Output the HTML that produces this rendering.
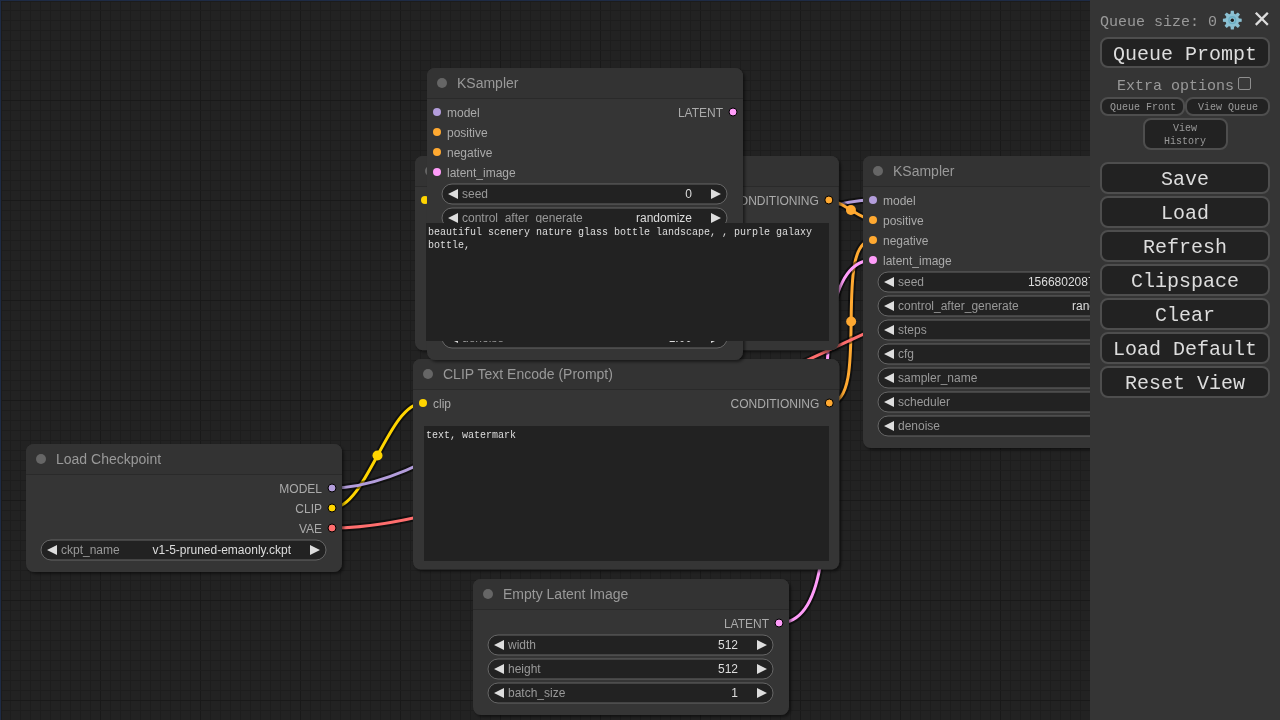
<!DOCTYPE html><html><head><meta charset="utf-8"><style>
html,body{margin:0;padding:0;width:1280px;height:720px;overflow:hidden;background:#222;}
svg{position:absolute;left:0;top:0;}
text{font-family:"Liberation Sans",sans-serif;}
.ta{position:absolute;box-sizing:border-box;background:#222;color:#ddd;font-family:"Liberation Mono",monospace;font-size:10px;line-height:13px;padding:3px 2px 2px 2px;white-space:pre-wrap;word-wrap:break-word;overflow:hidden;}
.menu{position:absolute;left:1090px;top:0;width:190px;height:720px;background:#353535;font-family:"Liberation Mono",monospace;color:#999;}
.btn{position:absolute;box-sizing:border-box;background:#222;color:#ddd;border:2px solid #4e4e4e;border-radius:8px;text-align:center;font-family:"Liberation Mono",monospace;}
.big{left:10px;width:170px;height:31.5px;font-size:20px;line-height:32px;}
</style></head><body><div style="position:absolute;left:0;top:0;width:1280px;height:720px;will-change:transform;">
<svg width="1280" height="720" viewBox="0 0 1280 720">
<defs><filter id="sh" x="-10%" y="-10%" width="130%" height="130%"><feDropShadow dx="2" dy="2" stdDeviation="1.5" flood-color="#000" flood-opacity="0.5"/></filter></defs>
<rect width="1280" height="720" fill="#222"/>
<g shape-rendering="crispEdges"><rect x="0" y="0" width="1" height="720" fill="#191919"/><rect x="10" y="0" width="1" height="720" fill="#1d1d1d"/><rect x="20" y="0" width="1" height="720" fill="#1d1d1d"/><rect x="30" y="0" width="1" height="720" fill="#1d1d1d"/><rect x="40" y="0" width="1" height="720" fill="#1d1d1d"/><rect x="50" y="0" width="1" height="720" fill="#1d1d1d"/><rect x="60" y="0" width="1" height="720" fill="#1d1d1d"/><rect x="70" y="0" width="1" height="720" fill="#1d1d1d"/><rect x="80" y="0" width="1" height="720" fill="#1d1d1d"/><rect x="90" y="0" width="1" height="720" fill="#1d1d1d"/><rect x="100" y="0" width="1" height="720" fill="#191919"/><rect x="110" y="0" width="1" height="720" fill="#1d1d1d"/><rect x="120" y="0" width="1" height="720" fill="#1d1d1d"/><rect x="130" y="0" width="1" height="720" fill="#1d1d1d"/><rect x="140" y="0" width="1" height="720" fill="#1d1d1d"/><rect x="150" y="0" width="1" height="720" fill="#1d1d1d"/><rect x="160" y="0" width="1" height="720" fill="#1d1d1d"/><rect x="170" y="0" width="1" height="720" fill="#1d1d1d"/><rect x="180" y="0" width="1" height="720" fill="#1d1d1d"/><rect x="190" y="0" width="1" height="720" fill="#1d1d1d"/><rect x="200" y="0" width="1" height="720" fill="#191919"/><rect x="210" y="0" width="1" height="720" fill="#1d1d1d"/><rect x="220" y="0" width="1" height="720" fill="#1d1d1d"/><rect x="230" y="0" width="1" height="720" fill="#1d1d1d"/><rect x="240" y="0" width="1" height="720" fill="#1d1d1d"/><rect x="250" y="0" width="1" height="720" fill="#1d1d1d"/><rect x="260" y="0" width="1" height="720" fill="#1d1d1d"/><rect x="270" y="0" width="1" height="720" fill="#1d1d1d"/><rect x="280" y="0" width="1" height="720" fill="#1d1d1d"/><rect x="290" y="0" width="1" height="720" fill="#1d1d1d"/><rect x="300" y="0" width="1" height="720" fill="#191919"/><rect x="310" y="0" width="1" height="720" fill="#1d1d1d"/><rect x="320" y="0" width="1" height="720" fill="#1d1d1d"/><rect x="330" y="0" width="1" height="720" fill="#1d1d1d"/><rect x="340" y="0" width="1" height="720" fill="#1d1d1d"/><rect x="350" y="0" width="1" height="720" fill="#1d1d1d"/><rect x="360" y="0" width="1" height="720" fill="#1d1d1d"/><rect x="370" y="0" width="1" height="720" fill="#1d1d1d"/><rect x="380" y="0" width="1" height="720" fill="#1d1d1d"/><rect x="390" y="0" width="1" height="720" fill="#1d1d1d"/><rect x="400" y="0" width="1" height="720" fill="#191919"/><rect x="410" y="0" width="1" height="720" fill="#1d1d1d"/><rect x="420" y="0" width="1" height="720" fill="#1d1d1d"/><rect x="430" y="0" width="1" height="720" fill="#1d1d1d"/><rect x="440" y="0" width="1" height="720" fill="#1d1d1d"/><rect x="450" y="0" width="1" height="720" fill="#1d1d1d"/><rect x="460" y="0" width="1" height="720" fill="#1d1d1d"/><rect x="470" y="0" width="1" height="720" fill="#1d1d1d"/><rect x="480" y="0" width="1" height="720" fill="#1d1d1d"/><rect x="490" y="0" width="1" height="720" fill="#1d1d1d"/><rect x="500" y="0" width="1" height="720" fill="#191919"/><rect x="510" y="0" width="1" height="720" fill="#1d1d1d"/><rect x="520" y="0" width="1" height="720" fill="#1d1d1d"/><rect x="530" y="0" width="1" height="720" fill="#1d1d1d"/><rect x="540" y="0" width="1" height="720" fill="#1d1d1d"/><rect x="550" y="0" width="1" height="720" fill="#1d1d1d"/><rect x="560" y="0" width="1" height="720" fill="#1d1d1d"/><rect x="570" y="0" width="1" height="720" fill="#1d1d1d"/><rect x="580" y="0" width="1" height="720" fill="#1d1d1d"/><rect x="590" y="0" width="1" height="720" fill="#1d1d1d"/><rect x="600" y="0" width="1" height="720" fill="#191919"/><rect x="610" y="0" width="1" height="720" fill="#1d1d1d"/><rect x="620" y="0" width="1" height="720" fill="#1d1d1d"/><rect x="630" y="0" width="1" height="720" fill="#1d1d1d"/><rect x="640" y="0" width="1" height="720" fill="#1d1d1d"/><rect x="650" y="0" width="1" height="720" fill="#1d1d1d"/><rect x="660" y="0" width="1" height="720" fill="#1d1d1d"/><rect x="670" y="0" width="1" height="720" fill="#1d1d1d"/><rect x="680" y="0" width="1" height="720" fill="#1d1d1d"/><rect x="690" y="0" width="1" height="720" fill="#1d1d1d"/><rect x="700" y="0" width="1" height="720" fill="#191919"/><rect x="710" y="0" width="1" height="720" fill="#1d1d1d"/><rect x="720" y="0" width="1" height="720" fill="#1d1d1d"/><rect x="730" y="0" width="1" height="720" fill="#1d1d1d"/><rect x="740" y="0" width="1" height="720" fill="#1d1d1d"/><rect x="750" y="0" width="1" height="720" fill="#1d1d1d"/><rect x="760" y="0" width="1" height="720" fill="#1d1d1d"/><rect x="770" y="0" width="1" height="720" fill="#1d1d1d"/><rect x="780" y="0" width="1" height="720" fill="#1d1d1d"/><rect x="790" y="0" width="1" height="720" fill="#1d1d1d"/><rect x="800" y="0" width="1" height="720" fill="#191919"/><rect x="810" y="0" width="1" height="720" fill="#1d1d1d"/><rect x="820" y="0" width="1" height="720" fill="#1d1d1d"/><rect x="830" y="0" width="1" height="720" fill="#1d1d1d"/><rect x="840" y="0" width="1" height="720" fill="#1d1d1d"/><rect x="850" y="0" width="1" height="720" fill="#1d1d1d"/><rect x="860" y="0" width="1" height="720" fill="#1d1d1d"/><rect x="870" y="0" width="1" height="720" fill="#1d1d1d"/><rect x="880" y="0" width="1" height="720" fill="#1d1d1d"/><rect x="890" y="0" width="1" height="720" fill="#1d1d1d"/><rect x="900" y="0" width="1" height="720" fill="#191919"/><rect x="910" y="0" width="1" height="720" fill="#1d1d1d"/><rect x="920" y="0" width="1" height="720" fill="#1d1d1d"/><rect x="930" y="0" width="1" height="720" fill="#1d1d1d"/><rect x="940" y="0" width="1" height="720" fill="#1d1d1d"/><rect x="950" y="0" width="1" height="720" fill="#1d1d1d"/><rect x="960" y="0" width="1" height="720" fill="#1d1d1d"/><rect x="970" y="0" width="1" height="720" fill="#1d1d1d"/><rect x="980" y="0" width="1" height="720" fill="#1d1d1d"/><rect x="990" y="0" width="1" height="720" fill="#1d1d1d"/><rect x="1000" y="0" width="1" height="720" fill="#191919"/><rect x="1010" y="0" width="1" height="720" fill="#1d1d1d"/><rect x="1020" y="0" width="1" height="720" fill="#1d1d1d"/><rect x="1030" y="0" width="1" height="720" fill="#1d1d1d"/><rect x="1040" y="0" width="1" height="720" fill="#1d1d1d"/><rect x="1050" y="0" width="1" height="720" fill="#1d1d1d"/><rect x="1060" y="0" width="1" height="720" fill="#1d1d1d"/><rect x="1070" y="0" width="1" height="720" fill="#1d1d1d"/><rect x="1080" y="0" width="1" height="720" fill="#1d1d1d"/><rect x="1090" y="0" width="1" height="720" fill="#1d1d1d"/><rect x="1100" y="0" width="1" height="720" fill="#191919"/><rect x="1110" y="0" width="1" height="720" fill="#1d1d1d"/><rect x="1120" y="0" width="1" height="720" fill="#1d1d1d"/><rect x="1130" y="0" width="1" height="720" fill="#1d1d1d"/><rect x="1140" y="0" width="1" height="720" fill="#1d1d1d"/><rect x="1150" y="0" width="1" height="720" fill="#1d1d1d"/><rect x="1160" y="0" width="1" height="720" fill="#1d1d1d"/><rect x="1170" y="0" width="1" height="720" fill="#1d1d1d"/><rect x="1180" y="0" width="1" height="720" fill="#1d1d1d"/><rect x="1190" y="0" width="1" height="720" fill="#1d1d1d"/><rect x="1200" y="0" width="1" height="720" fill="#191919"/><rect x="1210" y="0" width="1" height="720" fill="#1d1d1d"/><rect x="1220" y="0" width="1" height="720" fill="#1d1d1d"/><rect x="1230" y="0" width="1" height="720" fill="#1d1d1d"/><rect x="1240" y="0" width="1" height="720" fill="#1d1d1d"/><rect x="1250" y="0" width="1" height="720" fill="#1d1d1d"/><rect x="1260" y="0" width="1" height="720" fill="#1d1d1d"/><rect x="1270" y="0" width="1" height="720" fill="#1d1d1d"/><rect x="0" y="0" width="1280" height="1" fill="#191919"/><rect x="0" y="10" width="1280" height="1" fill="#1d1d1d"/><rect x="0" y="20" width="1280" height="1" fill="#1d1d1d"/><rect x="0" y="30" width="1280" height="1" fill="#1d1d1d"/><rect x="0" y="40" width="1280" height="1" fill="#1d1d1d"/><rect x="0" y="50" width="1280" height="1" fill="#1d1d1d"/><rect x="0" y="60" width="1280" height="1" fill="#1d1d1d"/><rect x="0" y="70" width="1280" height="1" fill="#1d1d1d"/><rect x="0" y="80" width="1280" height="1" fill="#1d1d1d"/><rect x="0" y="90" width="1280" height="1" fill="#1d1d1d"/><rect x="0" y="100" width="1280" height="1" fill="#191919"/><rect x="0" y="110" width="1280" height="1" fill="#1d1d1d"/><rect x="0" y="120" width="1280" height="1" fill="#1d1d1d"/><rect x="0" y="130" width="1280" height="1" fill="#1d1d1d"/><rect x="0" y="140" width="1280" height="1" fill="#1d1d1d"/><rect x="0" y="150" width="1280" height="1" fill="#1d1d1d"/><rect x="0" y="160" width="1280" height="1" fill="#1d1d1d"/><rect x="0" y="170" width="1280" height="1" fill="#1d1d1d"/><rect x="0" y="180" width="1280" height="1" fill="#1d1d1d"/><rect x="0" y="190" width="1280" height="1" fill="#1d1d1d"/><rect x="0" y="200" width="1280" height="1" fill="#191919"/><rect x="0" y="210" width="1280" height="1" fill="#1d1d1d"/><rect x="0" y="220" width="1280" height="1" fill="#1d1d1d"/><rect x="0" y="230" width="1280" height="1" fill="#1d1d1d"/><rect x="0" y="240" width="1280" height="1" fill="#1d1d1d"/><rect x="0" y="250" width="1280" height="1" fill="#1d1d1d"/><rect x="0" y="260" width="1280" height="1" fill="#1d1d1d"/><rect x="0" y="270" width="1280" height="1" fill="#1d1d1d"/><rect x="0" y="280" width="1280" height="1" fill="#1d1d1d"/><rect x="0" y="290" width="1280" height="1" fill="#1d1d1d"/><rect x="0" y="300" width="1280" height="1" fill="#191919"/><rect x="0" y="310" width="1280" height="1" fill="#1d1d1d"/><rect x="0" y="320" width="1280" height="1" fill="#1d1d1d"/><rect x="0" y="330" width="1280" height="1" fill="#1d1d1d"/><rect x="0" y="340" width="1280" height="1" fill="#1d1d1d"/><rect x="0" y="350" width="1280" height="1" fill="#1d1d1d"/><rect x="0" y="360" width="1280" height="1" fill="#1d1d1d"/><rect x="0" y="370" width="1280" height="1" fill="#1d1d1d"/><rect x="0" y="380" width="1280" height="1" fill="#1d1d1d"/><rect x="0" y="390" width="1280" height="1" fill="#1d1d1d"/><rect x="0" y="400" width="1280" height="1" fill="#191919"/><rect x="0" y="410" width="1280" height="1" fill="#1d1d1d"/><rect x="0" y="420" width="1280" height="1" fill="#1d1d1d"/><rect x="0" y="430" width="1280" height="1" fill="#1d1d1d"/><rect x="0" y="440" width="1280" height="1" fill="#1d1d1d"/><rect x="0" y="450" width="1280" height="1" fill="#1d1d1d"/><rect x="0" y="460" width="1280" height="1" fill="#1d1d1d"/><rect x="0" y="470" width="1280" height="1" fill="#1d1d1d"/><rect x="0" y="480" width="1280" height="1" fill="#1d1d1d"/><rect x="0" y="490" width="1280" height="1" fill="#1d1d1d"/><rect x="0" y="500" width="1280" height="1" fill="#191919"/><rect x="0" y="510" width="1280" height="1" fill="#1d1d1d"/><rect x="0" y="520" width="1280" height="1" fill="#1d1d1d"/><rect x="0" y="530" width="1280" height="1" fill="#1d1d1d"/><rect x="0" y="540" width="1280" height="1" fill="#1d1d1d"/><rect x="0" y="550" width="1280" height="1" fill="#1d1d1d"/><rect x="0" y="560" width="1280" height="1" fill="#1d1d1d"/><rect x="0" y="570" width="1280" height="1" fill="#1d1d1d"/><rect x="0" y="580" width="1280" height="1" fill="#1d1d1d"/><rect x="0" y="590" width="1280" height="1" fill="#1d1d1d"/><rect x="0" y="600" width="1280" height="1" fill="#191919"/><rect x="0" y="610" width="1280" height="1" fill="#1d1d1d"/><rect x="0" y="620" width="1280" height="1" fill="#1d1d1d"/><rect x="0" y="630" width="1280" height="1" fill="#1d1d1d"/><rect x="0" y="640" width="1280" height="1" fill="#1d1d1d"/><rect x="0" y="650" width="1280" height="1" fill="#1d1d1d"/><rect x="0" y="660" width="1280" height="1" fill="#1d1d1d"/><rect x="0" y="670" width="1280" height="1" fill="#1d1d1d"/><rect x="0" y="680" width="1280" height="1" fill="#1d1d1d"/><rect x="0" y="690" width="1280" height="1" fill="#1d1d1d"/><rect x="0" y="700" width="1280" height="1" fill="#191919"/><rect x="0" y="710" width="1280" height="1" fill="#1d1d1d"/></g>
<rect x="0" y="1" width="1280" height="1" fill="#1c1c1c"/><rect x="1" y="0" width="1" height="720" fill="#1c1c1c"/><rect x="0" y="0" width="1280" height="1" fill="#1e2b45"/><rect x="0" y="0" width="1" height="720" fill="#1e2b45"/>
<path d="M332 508 C366.74 508 388.26 403 423 403" fill="none" stroke="rgba(0,0,0,0.5)" stroke-width="7" stroke-linejoin="round"/>
<path d="M332 508 C366.74 508 388.26 403 423 403" fill="none" stroke="#FFD500" stroke-width="3"/>
<circle cx="377.5" cy="455.5" r="5" fill="#FFD500"/>
<path d="M332 488 C485.22 488 719.78 200 873 200" fill="none" stroke="rgba(0,0,0,0.5)" stroke-width="7" stroke-linejoin="round"/>
<path d="M332 488 C485.22 488 719.78 200 873 200" fill="none" stroke="#B39DDB" stroke-width="3"/>
<circle cx="602.5" cy="344" r="5" fill="#B39DDB"/>
<path d="M828.84 200 C840.96 200 860.88 220 873 220" fill="none" stroke="rgba(0,0,0,0.5)" stroke-width="7" stroke-linejoin="round"/>
<path d="M828.84 200 C840.96 200 860.88 220 873 220" fill="none" stroke="#FFA931" stroke-width="3"/>
<circle cx="850.92" cy="210" r="5" fill="#FFA931"/>
<path d="M829.28 403 C871.47 403 830.81 240 873 240" fill="none" stroke="rgba(0,0,0,0.5)" stroke-width="7" stroke-linejoin="round"/>
<path d="M829.28 403 C871.47 403 830.81 240 873 240" fill="none" stroke="#FFA931" stroke-width="3"/>
<circle cx="851.14" cy="321.5" r="5" fill="#FFA931"/>
<path d="M779 623 C872.74 623 779.26 260 873 260" fill="none" stroke="rgba(0,0,0,0.5)" stroke-width="7" stroke-linejoin="round"/>
<path d="M779 623 C872.74 623 779.26 260 873 260" fill="none" stroke="#FF9CF9" stroke-width="3"/>
<circle cx="826" cy="441.5" r="5" fill="#FF9CF9"/>
<path d="M1169 200 C1181.51 200 1206.49 202 1219 202" fill="none" stroke="rgba(0,0,0,0.5)" stroke-width="7" stroke-linejoin="round"/>
<path d="M1169 200 C1181.51 200 1206.49 202 1219 202" fill="none" stroke="#FF9CF9" stroke-width="3"/>
<circle cx="1194" cy="201" r="5" fill="#FF9CF9"/>
<path d="M332 528 C566.57 528 984.43 222 1219 222" fill="none" stroke="rgba(0,0,0,0.5)" stroke-width="7" stroke-linejoin="round"/>
<path d="M332 528 C566.57 528 984.43 222 1219 222" fill="none" stroke="#FF6E6E" stroke-width="3"/>
<circle cx="775.5" cy="375" r="5" fill="#FF6E6E"/>
<g>
<rect x="413" y="359" width="426.28" height="210.61" rx="8" fill="#353535" filter="url(#sh)"/>
<path d="M413 389 V367 A8 8 0 0 1 421 359 H831.28 A8 8 0 0 1 839.28 367 V389 Z" fill="#333"/>
<rect x="413" y="389" width="426.28" height="1" fill="rgba(0,0,0,0.2)"/>
<circle cx="428" cy="374" r="5" fill="#666"/>
<text x="443" y="379" font-size="14" fill="#999">CLIP Text Encode (Prompt)</text>
<circle cx="423" cy="403" r="4" fill="#FFD500"/>
<text x="433" y="408" font-size="12" fill="#AAA">clip</text>
<circle cx="829.28" cy="403" r="4" fill="#FFA931" stroke="#000" stroke-width="1"/>
<text x="819.28" y="408" font-size="12" fill="#AAA" text-anchor="end">CONDITIONING</text>
</g>
<g>
<rect x="415" y="156" width="423.84" height="194.31" rx="8" fill="#353535" filter="url(#sh)"/>
<path d="M415 186 V164 A8 8 0 0 1 423 156 H830.84 A8 8 0 0 1 838.84 164 V186 Z" fill="#333"/>
<rect x="415" y="186" width="423.84" height="1" fill="rgba(0,0,0,0.2)"/>
<circle cx="430" cy="171" r="5" fill="#666"/>
<text x="445" y="176" font-size="14" fill="#999">CLIP Text Encode (Prompt)</text>
<circle cx="425" cy="200" r="4" fill="#FFD500"/>
<text x="435" y="205" font-size="12" fill="#AAA">clip</text>
<circle cx="828.84" cy="200" r="4" fill="#FFA931" stroke="#000" stroke-width="1"/>
<text x="818.84" y="205" font-size="12" fill="#AAA" text-anchor="end">CONDITIONING</text>
</g>
<g>
<rect x="473" y="579" width="316" height="136" rx="8" fill="#353535" filter="url(#sh)"/>
<path d="M473 609 V587 A8 8 0 0 1 481 579 H781 A8 8 0 0 1 789 587 V609 Z" fill="#333"/>
<rect x="473" y="609" width="316" height="1" fill="rgba(0,0,0,0.2)"/>
<circle cx="488" cy="594" r="5" fill="#666"/>
<text x="503" y="599" font-size="14" fill="#999">Empty Latent Image</text>
<circle cx="779" cy="623" r="4" fill="#FF9CF9" stroke="#000" stroke-width="1"/>
<text x="769" y="628" font-size="12" fill="#AAA" text-anchor="end">LATENT</text>
<rect x="488" y="635" width="285" height="20" rx="10" fill="#222" stroke="#666" stroke-width="1"/>
<path d="M504 640 L494 645 L504 650 Z M757 640 L767 645 L757 650 Z" fill="#DDD"/>
<text x="508" y="649" font-size="12" fill="#999">width</text>
<text x="738" y="649" font-size="12" fill="#DDD" text-anchor="end">512</text>
<rect x="488" y="659" width="285" height="20" rx="10" fill="#222" stroke="#666" stroke-width="1"/>
<path d="M504 664 L494 669 L504 674 Z M757 664 L767 669 L757 674 Z" fill="#DDD"/>
<text x="508" y="673" font-size="12" fill="#999">height</text>
<text x="738" y="673" font-size="12" fill="#DDD" text-anchor="end">512</text>
<rect x="488" y="683" width="285" height="20" rx="10" fill="#222" stroke="#666" stroke-width="1"/>
<path d="M504 688 L494 693 L504 698 Z M757 688 L767 693 L757 698 Z" fill="#DDD"/>
<text x="508" y="697" font-size="12" fill="#999">batch_size</text>
<text x="738" y="697" font-size="12" fill="#DDD" text-anchor="end">1</text>
</g>
<g>
<rect x="863" y="156" width="316" height="292" rx="8" fill="#353535" filter="url(#sh)"/>
<path d="M863 186 V164 A8 8 0 0 1 871 156 H1171 A8 8 0 0 1 1179 164 V186 Z" fill="#333"/>
<rect x="863" y="186" width="316" height="1" fill="rgba(0,0,0,0.2)"/>
<circle cx="878" cy="171" r="5" fill="#666"/>
<text x="893" y="176" font-size="14" fill="#999">KSampler</text>
<circle cx="873" cy="200" r="4" fill="#B39DDB"/>
<text x="883" y="205" font-size="12" fill="#AAA">model</text>
<circle cx="873" cy="220" r="4" fill="#FFA931"/>
<text x="883" y="225" font-size="12" fill="#AAA">positive</text>
<circle cx="873" cy="240" r="4" fill="#FFA931"/>
<text x="883" y="245" font-size="12" fill="#AAA">negative</text>
<circle cx="873" cy="260" r="4" fill="#FF9CF9"/>
<text x="883" y="265" font-size="12" fill="#AAA">latent_image</text>
<circle cx="1169" cy="200" r="4" fill="#FF9CF9" stroke="#000" stroke-width="1"/>
<text x="1159" y="205" font-size="12" fill="#AAA" text-anchor="end">LATENT</text>
<rect x="878" y="272" width="285" height="20" rx="10" fill="#222" stroke="#666" stroke-width="1"/>
<path d="M894 277 L884 282 L894 287 Z M1147 277 L1157 282 L1147 287 Z" fill="#DDD"/>
<text x="898" y="286" font-size="12" fill="#999">seed</text>
<text x="1128" y="286" font-size="12" fill="#DDD" text-anchor="end">156680208700286</text>
<rect x="878" y="296" width="285" height="20" rx="10" fill="#222" stroke="#666" stroke-width="1"/>
<path d="M894 301 L884 306 L894 311 Z M1147 301 L1157 306 L1147 311 Z" fill="#DDD"/>
<text x="898" y="310" font-size="12" fill="#999">control_after_generate</text>
<text x="1128" y="310" font-size="12" fill="#DDD" text-anchor="end">randomize</text>
<rect x="878" y="320" width="285" height="20" rx="10" fill="#222" stroke="#666" stroke-width="1"/>
<path d="M894 325 L884 330 L894 335 Z M1147 325 L1157 330 L1147 335 Z" fill="#DDD"/>
<text x="898" y="334" font-size="12" fill="#999">steps</text>
<text x="1128" y="334" font-size="12" fill="#DDD" text-anchor="end">20</text>
<rect x="878" y="344" width="285" height="20" rx="10" fill="#222" stroke="#666" stroke-width="1"/>
<path d="M894 349 L884 354 L894 359 Z M1147 349 L1157 354 L1147 359 Z" fill="#DDD"/>
<text x="898" y="358" font-size="12" fill="#999">cfg</text>
<text x="1128" y="358" font-size="12" fill="#DDD" text-anchor="end">8.0</text>
<rect x="878" y="368" width="285" height="20" rx="10" fill="#222" stroke="#666" stroke-width="1"/>
<path d="M894 373 L884 378 L894 383 Z M1147 373 L1157 378 L1147 383 Z" fill="#DDD"/>
<text x="898" y="382" font-size="12" fill="#999">sampler_name</text>
<text x="1128" y="382" font-size="12" fill="#DDD" text-anchor="end">euler</text>
<rect x="878" y="392" width="285" height="20" rx="10" fill="#222" stroke="#666" stroke-width="1"/>
<path d="M894 397 L884 402 L894 407 Z M1147 397 L1157 402 L1147 407 Z" fill="#DDD"/>
<text x="898" y="406" font-size="12" fill="#999">scheduler</text>
<text x="1128" y="406" font-size="12" fill="#DDD" text-anchor="end">normal</text>
<rect x="878" y="416" width="285" height="20" rx="10" fill="#222" stroke="#666" stroke-width="1"/>
<path d="M894 421 L884 426 L894 431 Z M1147 421 L1157 426 L1147 431 Z" fill="#DDD"/>
<text x="898" y="430" font-size="12" fill="#999">denoise</text>
<text x="1128" y="430" font-size="12" fill="#DDD" text-anchor="end">1.00</text>
</g>
<g>
<rect x="1209" y="158" width="211" height="76" rx="8" fill="#353535" filter="url(#sh)"/>
<path d="M1209 188 V166 A8 8 0 0 1 1217 158 H1412 A8 8 0 0 1 1420 166 V188 Z" fill="#333"/>
<rect x="1209" y="188" width="211" height="1" fill="rgba(0,0,0,0.2)"/>
<circle cx="1224" cy="173" r="5" fill="#666"/>
<text x="1239" y="178" font-size="14" fill="#999">VAE Decode</text>
<circle cx="1219" cy="202" r="4" fill="#FF9CF9"/>
<text x="1229" y="207" font-size="12" fill="#AAA">samples</text>
<circle cx="1219" cy="222" r="4" fill="#FF6E6E"/>
<text x="1229" y="227" font-size="12" fill="#AAA">vae</text>
<circle cx="1410" cy="202" r="4" fill="#64B5F6" stroke="#000" stroke-width="1"/>
<text x="1400" y="207" font-size="12" fill="#AAA" text-anchor="end">IMAGE</text>
</g>
<g>
<rect x="26" y="444" width="316" height="128" rx="8" fill="#353535" filter="url(#sh)"/>
<path d="M26 474 V452 A8 8 0 0 1 34 444 H334 A8 8 0 0 1 342 452 V474 Z" fill="#333"/>
<rect x="26" y="474" width="316" height="1" fill="rgba(0,0,0,0.2)"/>
<circle cx="41" cy="459" r="5" fill="#666"/>
<text x="56" y="464" font-size="14" fill="#999">Load Checkpoint</text>
<circle cx="332" cy="488" r="4" fill="#B39DDB" stroke="#000" stroke-width="1"/>
<text x="322" y="493" font-size="12" fill="#AAA" text-anchor="end">MODEL</text>
<circle cx="332" cy="508" r="4" fill="#FFD500" stroke="#000" stroke-width="1"/>
<text x="322" y="513" font-size="12" fill="#AAA" text-anchor="end">CLIP</text>
<circle cx="332" cy="528" r="4" fill="#FF6E6E" stroke="#000" stroke-width="1"/>
<text x="322" y="533" font-size="12" fill="#AAA" text-anchor="end">VAE</text>
<rect x="41" y="540" width="285" height="20" rx="10" fill="#222" stroke="#666" stroke-width="1"/>
<path d="M57 545 L47 550 L57 555 Z M310 545 L320 550 L310 555 Z" fill="#DDD"/>
<text x="61" y="554" font-size="12" fill="#999">ckpt_name</text>
<text x="291" y="554" font-size="12" fill="#DDD" text-anchor="end">v1-5-pruned-emaonly.ckpt</text>
</g>
<g>
<rect x="427" y="68" width="316" height="292" rx="8" fill="#353535" filter="url(#sh)"/>
<path d="M427 98 V76 A8 8 0 0 1 435 68 H735 A8 8 0 0 1 743 76 V98 Z" fill="#333"/>
<rect x="427" y="98" width="316" height="1" fill="rgba(0,0,0,0.2)"/>
<circle cx="442" cy="83" r="5" fill="#666"/>
<text x="457" y="88" font-size="14" fill="#999">KSampler</text>
<circle cx="437" cy="112" r="4" fill="#B39DDB"/>
<text x="447" y="117" font-size="12" fill="#AAA">model</text>
<circle cx="437" cy="132" r="4" fill="#FFA931"/>
<text x="447" y="137" font-size="12" fill="#AAA">positive</text>
<circle cx="437" cy="152" r="4" fill="#FFA931"/>
<text x="447" y="157" font-size="12" fill="#AAA">negative</text>
<circle cx="437" cy="172" r="4" fill="#FF9CF9"/>
<text x="447" y="177" font-size="12" fill="#AAA">latent_image</text>
<circle cx="733" cy="112" r="4" fill="#FF9CF9" stroke="#000" stroke-width="1"/>
<text x="723" y="117" font-size="12" fill="#AAA" text-anchor="end">LATENT</text>
<rect x="442" y="184" width="285" height="20" rx="10" fill="#222" stroke="#666" stroke-width="1"/>
<path d="M458 189 L448 194 L458 199 Z M711 189 L721 194 L711 199 Z" fill="#DDD"/>
<text x="462" y="198" font-size="12" fill="#999">seed</text>
<text x="692" y="198" font-size="12" fill="#DDD" text-anchor="end">0</text>
<rect x="442" y="208" width="285" height="20" rx="10" fill="#222" stroke="#666" stroke-width="1"/>
<path d="M458 213 L448 218 L458 223 Z M711 213 L721 218 L711 223 Z" fill="#DDD"/>
<text x="462" y="222" font-size="12" fill="#999">control_after_generate</text>
<text x="692" y="222" font-size="12" fill="#DDD" text-anchor="end">randomize</text>
<rect x="442" y="232" width="285" height="20" rx="10" fill="#222" stroke="#666" stroke-width="1"/>
<path d="M458 237 L448 242 L458 247 Z M711 237 L721 242 L711 247 Z" fill="#DDD"/>
<text x="462" y="246" font-size="12" fill="#999">steps</text>
<text x="692" y="246" font-size="12" fill="#DDD" text-anchor="end">20</text>
<rect x="442" y="256" width="285" height="20" rx="10" fill="#222" stroke="#666" stroke-width="1"/>
<path d="M458 261 L448 266 L458 271 Z M711 261 L721 266 L711 271 Z" fill="#DDD"/>
<text x="462" y="270" font-size="12" fill="#999">cfg</text>
<text x="692" y="270" font-size="12" fill="#DDD" text-anchor="end">8.0</text>
<rect x="442" y="280" width="285" height="20" rx="10" fill="#222" stroke="#666" stroke-width="1"/>
<path d="M458 285 L448 290 L458 295 Z M711 285 L721 290 L711 295 Z" fill="#DDD"/>
<text x="462" y="294" font-size="12" fill="#999">sampler_name</text>
<text x="692" y="294" font-size="12" fill="#DDD" text-anchor="end">euler</text>
<rect x="442" y="304" width="285" height="20" rx="10" fill="#222" stroke="#666" stroke-width="1"/>
<path d="M458 309 L448 314 L458 319 Z M711 309 L721 314 L711 319 Z" fill="#DDD"/>
<text x="462" y="318" font-size="12" fill="#999">scheduler</text>
<text x="692" y="318" font-size="12" fill="#DDD" text-anchor="end">normal</text>
<rect x="442" y="328" width="285" height="20" rx="10" fill="#222" stroke="#666" stroke-width="1"/>
<path d="M458 333 L448 338 L458 343 Z M711 333 L721 338 L711 343 Z" fill="#DDD"/>
<text x="462" y="342" font-size="12" fill="#999">denoise</text>
<text x="692" y="342" font-size="12" fill="#DDD" text-anchor="end">1.00</text>
</g>
</svg>
<div class="ta" style="left:426px;top:223px;width:402.84px;height:118.31px;">beautiful scenery nature glass bottle landscape, , purple galaxy bottle,</div>
<div class="ta" style="left:424px;top:426px;width:405.28px;height:134.61px;">text, watermark</div>
<div class="menu">
<div style="position:absolute;left:10px;top:12px;font-size:15px;line-height:22px;white-space:pre;">Queue size: 0</div>
<svg style="position:absolute;left:0;top:0" width="190" height="60"><g transform="translate(142.3 20.2)">
<path d="M-1.9 -6 L-1.5 -9.4 L1.5 -9.4 L1.9 -6 Z" transform="rotate(0)" fill="#8bc0d2"/><path d="M-1.9 -6 L-1.5 -9.4 L1.5 -9.4 L1.9 -6 Z" transform="rotate(45)" fill="#8bc0d2"/><path d="M-1.9 -6 L-1.5 -9.4 L1.5 -9.4 L1.9 -6 Z" transform="rotate(90)" fill="#8bc0d2"/><path d="M-1.9 -6 L-1.5 -9.4 L1.5 -9.4 L1.9 -6 Z" transform="rotate(135)" fill="#8bc0d2"/><path d="M-1.9 -6 L-1.5 -9.4 L1.5 -9.4 L1.9 -6 Z" transform="rotate(180)" fill="#8bc0d2"/><path d="M-1.9 -6 L-1.5 -9.4 L1.5 -9.4 L1.9 -6 Z" transform="rotate(225)" fill="#8bc0d2"/><path d="M-1.9 -6 L-1.5 -9.4 L1.5 -9.4 L1.9 -6 Z" transform="rotate(270)" fill="#8bc0d2"/><path d="M-1.9 -6 L-1.5 -9.4 L1.5 -9.4 L1.9 -6 Z" transform="rotate(315)" fill="#8bc0d2"/>
<circle r="6.8" fill="#8bc0d2"/><circle r="3.4" fill="none" stroke="#6aaec4" stroke-width="1.4"/><circle r="1.7" fill="#1c1c1c"/>
</g>
<path d="M166.6 13.6 L177 24 M177 13.6 L166.6 24" stroke="#ddd" stroke-width="2.3" stroke-linecap="square"/>
</svg>
<div class="btn big" style="top:36.5px;">Queue Prompt</div>
<div style="position:absolute;left:27px;top:77px;font-size:15px;line-height:20px;white-space:pre;">Extra options</div>
<div style="position:absolute;left:148px;top:77px;width:13px;height:13px;box-sizing:border-box;border:1px solid #8e8e8e;border-radius:2px;background:#393939;"></div>
<div class="btn" style="left:10px;top:97px;width:85px;height:18.5px;font-size:10px;line-height:15px;padding:1px 0 0 1px;color:#999;">Queue Front</div>
<div class="btn" style="left:95px;top:97px;width:85px;height:18.5px;font-size:10px;line-height:15px;padding:1px 0 0 1px;color:#999;">View Queue</div>
<div class="btn" style="left:52.5px;top:118px;width:85px;height:31.5px;font-size:10px;line-height:13px;padding-top:2px;box-sizing:border-box;color:#999;">View<br>History</div>
<div class="btn big" style="top:162px;">Save</div>
<div class="btn big" style="top:196px;">Load</div>
<div class="btn big" style="top:230px;">Refresh</div>
<div class="btn big" style="top:264px;">Clipspace</div>
<div class="btn big" style="top:298px;">Clear</div>
<div class="btn big" style="top:332px;">Load Default</div>
<div class="btn big" style="top:366px;">Reset View</div>
</div>
</div></body></html>
